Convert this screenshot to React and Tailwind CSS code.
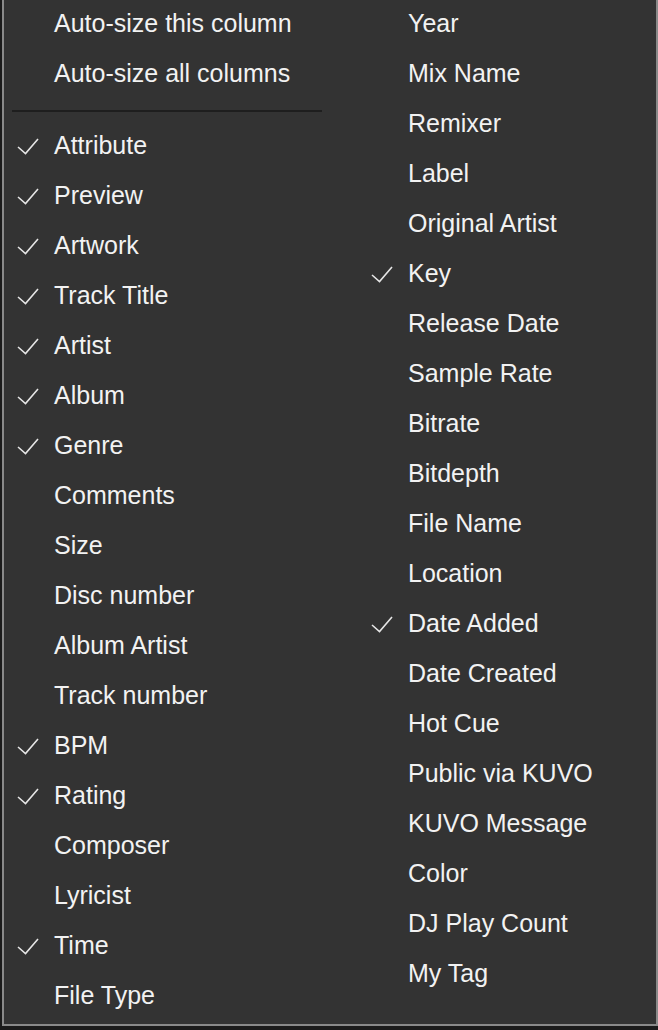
import React from "react";

const leftTop = ["Auto-size this column", "Auto-size all columns"];

const leftItems = [
  ["Attribute", true],
  ["Preview", true],
  ["Artwork", true],
  ["Track Title", true],
  ["Artist", true],
  ["Album", true],
  ["Genre", true],
  ["Comments", false],
  ["Size", false],
  ["Disc number", false],
  ["Album Artist", false],
  ["Track number", false],
  ["BPM", true],
  ["Rating", true],
  ["Composer", false],
  ["Lyricist", false],
  ["Time", true],
  ["File Type", false],
];

const rightItems = [
  ["Year", false],
  ["Mix Name", false],
  ["Remixer", false],
  ["Label", false],
  ["Original Artist", false],
  ["Key", true],
  ["Release Date", false],
  ["Sample Rate", false],
  ["Bitrate", false],
  ["Bitdepth", false],
  ["File Name", false],
  ["Location", false],
  ["Date Added", true],
  ["Date Created", false],
  ["Hot Cue", false],
  ["Public via KUVO", false],
  ["KUVO Message", false],
  ["Color", false],
  ["DJ Play Count", false],
  ["My Tag", false],
];

const Check = () => (
  <svg width="50" height="50" viewBox="0 0 50 50" className="block">
    <path d="M14 25 L21.5 31.5 L34 17" fill="none" stroke="#e6e6e6" strokeWidth="1.6" />
  </svg>
);

const Row = ({ label, checked }) => (
  <div className="flex h-[50px] items-center">
    <div className="w-[50px] h-[50px] shrink-0">{checked && <Check />}</div>
    <span className="leading-[46px] pb-[4px] whitespace-nowrap">{label}</span>
  </div>
);

export default function App() {
  return (
    <div
      className="w-[658px] h-[1030px] bg-[#1b1b1b] overflow-hidden text-[25px] text-[#f2f2f2]"
      style={{ fontFamily: '"Liberation Sans", Arial, sans-serif' }}
    >
      <div className="ml-[2px] w-[656px] h-[1026px] bg-[#333333] border-l-2 border-r-2 border-b-2 border-[#8a8a8a] flex">
        <div className="w-[354px] shrink-0">
          {leftTop.map((t) => (
            <Row key={t} label={t} checked={false} />
          ))}
          <div className="h-[22px] flex items-center">
            <div className="ml-[8px] w-[310px] h-[2px] bg-[#1e1e1e]" />
          </div>
          {leftItems.map(([t, c]) => (
            <Row key={t} label={t} checked={c} />
          ))}
        </div>
        <div className="flex-1">
          {rightItems.map(([t, c]) => (
            <Row key={t} label={t} checked={c} />
          ))}
        </div>
      </div>
    </div>
  );
}
